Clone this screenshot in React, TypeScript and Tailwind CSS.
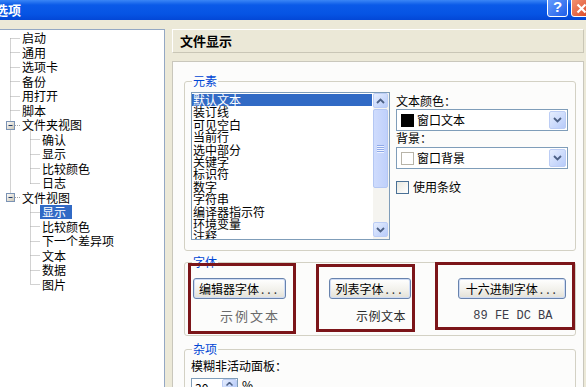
import React from "react";

const CJK = "font-['Noto_Sans_CJK_SC','Noto_Sans_CJK_JP',sans-serif]";

function Chevron({ up = false }: { up?: boolean }) {
  return (
    <svg width="9" height="6" viewBox="0 0 9 6">
      <path
        d={up ? "M1 5 L4.5 1.5 L8 5" : "M1 1 L4.5 4.5 L8 1"}
        fill="none"
        stroke="#4d6185"
        strokeWidth="1.8"
      />
    </svg>
  );
}

function ScrollBtn({ up }: { up?: boolean }) {
  return (
    <div className="w-[15px] h-[15px] rounded-[2px] border border-[#bccdf5] bg-[linear-gradient(135deg,#e6eefe,#b7cbfa)] flex items-center justify-center">
      <Chevron up={up} />
    </div>
  );
}

function TitleBar() {
  return (
    <div className="h-[20px] flex justify-between overflow-hidden bg-[linear-gradient(180deg,#3a86f6_0%,#0a5ae8_25%,#0654e4_70%,#0347d6_100%)]">
      <span className="-ml-[5px] mt-[3px] text-white font-bold text-[13px] leading-[14px]">选项</span>
      <div className="flex gap-[3px] -mt-[4px] -mr-[6px]">
        <div className="w-[21px] h-[21px] rounded-[3px] border border-white bg-[linear-gradient(135deg,#6aa0ff,#1f5ee8)] flex items-end justify-center pb-[1px]">
          <span className="text-white font-bold text-[15px] leading-[16px] font-['Liberation_Sans',sans-serif]">?</span>
        </div>
        <div className="w-[21px] h-[21px] rounded-[3px] border border-white bg-[linear-gradient(135deg,#f59a7a,#d9431f)] flex items-end justify-center pb-[2px]">
          <svg width="11" height="11" viewBox="0 0 11 11">
            <path d="M1.5 1.5 L9.5 9.5 M9.5 1.5 L1.5 9.5" stroke="white" strokeWidth="2.2" />
          </svg>
        </div>
      </div>
    </div>
  );
}

const treeRows: { t: string; l: number; box?: boolean; sel?: boolean }[] = [
  { t: "启动", l: 1 },
  { t: "通用", l: 1 },
  { t: "选项卡", l: 1 },
  { t: "备份", l: 1 },
  { t: "用打开", l: 1 },
  { t: "脚本", l: 1 },
  { t: "文件夹视图", l: 1, box: true },
  { t: "确认", l: 2 },
  { t: "显示", l: 2 },
  { t: "比较颜色", l: 2 },
  { t: "日志", l: 2 },
  { t: "文件视图", l: 1, box: true },
  { t: "显示", l: 2, sel: true },
  { t: "比较颜色", l: 2 },
  { t: "下一个差异项", l: 2 },
  { t: "文本", l: 2 },
  { t: "数据", l: 2 },
  { t: "图片", l: 2 },
];

function TreeLines() {
  const c = (i: number) => Math.floor(8.25 + 14.5 * i) + 0.5;
  const dot = { stroke: "#a5a5a5", strokeWidth: 1, strokeDasharray: "1 1" };
  return (
    <svg className="absolute left-0 top-0" width="165" height="300">
      <line x1="10.5" y1={c(0)} x2="10.5" y2={c(11)} {...dot} />
      <line x1="30.5" y1={c(6) + 5} x2="30.5" y2={c(10)} {...dot} />
      <line x1="30.5" y1={c(11) + 5} x2="30.5" y2={c(17)} {...dot} />
      {treeRows.map((r, i) =>
        r.l === 1 ? (
          <line key={i} x1={r.box ? 15 : 10.5} y1={c(i)} x2="20" y2={c(i)} {...dot} />
        ) : (
          <line key={i} x1="30.5" y1={c(i)} x2="40" y2={c(i)} {...dot} />
        )
      )}
      <defs>
        <linearGradient id="bx" x1="0" y1="0" x2="1" y2="1">
          <stop offset="0" stopColor="#ffffff" />
          <stop offset="1" stopColor="#c8c2b0" />
        </linearGradient>
      </defs>
      {[6, 11].map((i) => (
        <g key={i}>
          <rect x="6.5" y={c(i) - 4} width="8" height="8" fill="url(#bx)" stroke="#7b93b4" />
          <line x1="8.5" y1={c(i)} x2="12.5" y2={c(i)} stroke="#1e3a6a" />
        </g>
      ))}
    </svg>
  );
}

function Tree() {
  return (
    <div className="relative w-[165px] h-[358px] bg-white border-t border-r border-[#94a8c4] pt-[1px]">
      <TreeLines />
      {treeRows.map((r, i) => (
        <div
          key={i}
          className={`relative h-[14.5px] flex items-center leading-[14px] ${r.l === 1 ? "pl-[22px]" : "pl-[42px]"}`}
        >
          {r.sel ? (
            <span className="-ml-[2px] w-[32px] pl-[2px] bg-[#316ac5] text-white">{r.t}</span>
          ) : (
            <span>{r.t}</span>
          )}
        </div>
      ))}
    </div>
  );
}

const listItems = [
  "默认文本",
  "装订线",
  "可见空白",
  "当前行",
  "选中部分",
  "关键字",
  "标识符",
  "数字",
  "字符串",
  "编译器指示符",
  "环境变量",
  "注释",
];

function ListBox() {
  return (
    <div className="w-[199px] h-[148px] border border-[#7f9db9] bg-white flex overflow-hidden">
      <div className="w-[181px] pt-[1px] overflow-hidden">
        {listItems.map((t, i) => (
          <div
            key={i}
            className={`h-[12.4px] leading-[12.4px] pl-[1px] whitespace-nowrap ${i === 0 ? "bg-[#316ac5] text-white w-[180px]" : ""}`}
          >
            {t}
          </div>
        ))}
      </div>
      <div className="w-[16px] flex flex-col bg-[#f5f4f0] pb-[2px]">
        <ScrollBtn up />
        <div className="mt-[1px] h-[79px] w-[15px] rounded-[2px] border border-[#b4c7f3] bg-[linear-gradient(90deg,#cfdcfd,#bfd0fb)] flex flex-col items-center justify-center gap-[1px]">
          {[0, 1, 2, 3].map((k) => (
            <div key={k} className="w-[7px] h-[1px] bg-[#8fa9e8] shadow-[0_1px_0_#eef3ff]" />
          ))}
        </div>
        <div className="flex-1" />
        <ScrollBtn />
      </div>
    </div>
  );
}

function Combo({ swatch, text }: { swatch: string; text: string }) {
  return (
    <div className="w-[172px] h-[22px] border border-[#7f9db9] bg-white flex items-center">
      <div className={`ml-[4px] w-[13px] h-[13px] ${swatch}`} />
      <span className="ml-[3px] flex-1 leading-[14px]">{text}</span>
      <div className="mr-[1px] w-[17px] h-[18px] rounded-[2px] border border-[#bccdf5] bg-[linear-gradient(135deg,#e6eefe,#b7cbfa)] flex items-center justify-center">
        <Chevron />
      </div>
    </div>
  );
}

function XPButton({ label, w }: { label: string; w: string }) {
  return (
    <div
      className={`${w} h-[21px] rounded-[3px] border border-[#6883ad] shadow-[inset_0_0_0_1px_#cfdcf5] bg-[linear-gradient(180deg,#ffffff,#f1f0ea_60%,#e2e0d6)] flex items-center justify-center leading-[14px] whitespace-nowrap`}
    >
      <span>{label}</span>
      <span className="tracking-[3px] pl-[2px] text-[#333]">...</span>
    </div>
  );
}

function Legend({ t, cls }: { t: string; cls: string }) {
  return <legend className={`${cls} px-[1px] text-[#0046d5] leading-[12px]`}>{t}</legend>;
}

function Panel() {
  return (
    <div className="mt-[8px] h-[330px] border border-[#c9c7bc] bg-[#fcfcfb] pt-[13px] pl-[11px] pr-[7px]">
      <fieldset className="min-w-0 border border-[#d3d1c4] rounded-[3px] pl-[6px] pb-[10px]">
        <Legend t="元素" cls="ml-[1px]" />
        <div className="flex items-start mt-[5px]">
          <ListBox />
          <div className="ml-[6px] flex flex-col">
            <div className="mt-[3px] leading-[12px]">文本颜色：</div>
            <div className="mt-[2px]">
              <Combo swatch="bg-black" text="窗口文本" />
            </div>
            <div className="mt-[1px] leading-[12px]">背景：</div>
            <div className="mt-[3px]">
              <Combo swatch="bg-white border border-[#b8b4a8]" text="窗口背景" />
            </div>
            <div className="mt-[11px] flex items-center">
              <div className="w-[13px] h-[13px] border border-[#4a7196] bg-[linear-gradient(135deg,#e8e8e0,#ffffff)]" />
              <span className="ml-[4px] leading-[14px]">使用条纹</span>
            </div>
          </div>
        </div>
      </fieldset>

      <fieldset className="min-w-0 mt-[5px] border border-[#d3d1c4] rounded-[3px] pl-[3px] pb-[1px]">
        <Legend t="字体" cls="ml-[4px]" />
        <div className="flex items-start -mt-[5px]">
          <div className="w-[110px] h-[71px] border-[3px] border-[#7c1519] flex flex-col pl-[2px] pt-[12px]">
            <XPButton label="编辑器字体" w="w-[93px]" />
            <div className="mt-[10px] ml-[27px] text-[13px] tracking-[2px] leading-[14px] text-[#6a6a6a]">示例文本</div>
          </div>
          <div className="ml-[20px] mt-[1px] w-[101px] h-[68px] border-[3px] border-[#7c1519] flex flex-col pl-[10px] pt-[11px]">
            <XPButton label="列表字体" w="w-[82px]" />
            <div className="mt-[10px] ml-[27px] leading-[14px] tracking-[0.5px] text-[#2a2a2a]">示例文本</div>
          </div>
          <div className="ml-[20px] -mt-[1px] w-[142px] h-[68px] border-[3px] border-[#7c1519] flex flex-col pl-[20px] pt-[13px]">
            <XPButton label="十六进制字体" w="w-[108px]" />
            <div className="mt-[10px] ml-[15px] font-['Liberation_Mono',monospace] text-[12px] leading-[14px] text-[#3c3c4a] whitespace-pre">89 FE DC BA</div>
          </div>
        </div>
      </fieldset>

      <fieldset className="min-w-0 mt-[7px] h-[60px] border border-[#d3d1c4] rounded-[3px] pl-[6px]">
        <Legend t="杂项" cls="ml-[1px]" />
        <div className="mt-[5px] leading-[12px]">模糊非活动面板：</div>
        <div className="mt-[6px] flex items-start">
          <div className="w-[47px] h-[20px] border border-[#7f9db9] bg-white flex">
            <span className="flex-1 pl-[3px] leading-[18px]">30</span>
            <div className="w-[15px] h-[9px] rounded-[2px] border border-[#bccdf5] bg-[linear-gradient(135deg,#e6eefe,#b7cbfa)] flex items-center justify-center">
              <svg width="7" height="4" viewBox="0 0 7 4">
                <path d="M0.5 3.5 L3.5 0.5 L6.5 3.5" fill="none" stroke="#4d6185" strokeWidth="1.5" />
              </svg>
            </div>
          </div>
          <span className="ml-[4px] leading-[14px]">%</span>
        </div>
      </fieldset>
    </div>
  );
}

function Header() {
  return (
    <div className="h-[24px] flex items-center pl-[7px] bg-[#ebe8d7] border border-t-white border-l-white border-b-[#c9c6b6] border-r-[#c9c6b6] font-bold text-[13px] leading-[14px]">
      文件显示
    </div>
  );
}

export default function App() {
  return (
    <div className={`w-[586px] h-[387px] overflow-hidden bg-[#ece9d8] text-[12px] leading-[12px] text-black ${CJK}`}>
      <TitleBar />
      <div className="flex pt-[9px]">
        <Tree />
        <div className="ml-[7px] w-[412px] flex flex-col">
          <Header />
          <Panel />
        </div>
      </div>
    </div>
  );
}
